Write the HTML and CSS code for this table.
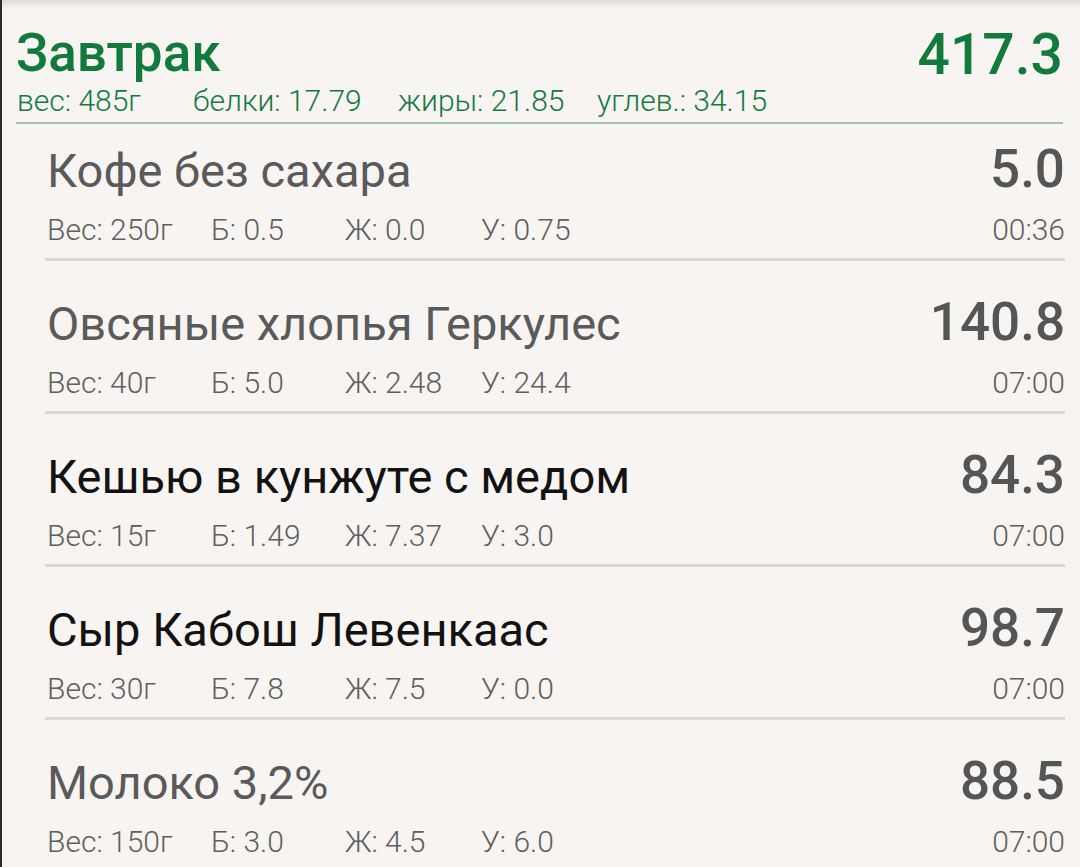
FILE: index.html
```html
<!DOCTYPE html>
<html lang="ru">
<head>
<meta charset="utf-8">
<title>Завтрак</title>
<link rel="stylesheet" href="styles.css">
</head>
<body>
<div class="screen">
  <header class="meal">
    <div class="meal-top">
      <h1 class="meal-title">Завтрак</h1>
      <div class="meal-kcal">417.3</div>
    </div>
    <div class="meal-stats">
      <span>вес: 485г</span>
      <span>белки: 17.79</span>
      <span>жиры: 21.85</span>
      <span>углев.: 34.15</span>
    </div>
  </header>
  <ul class="items">
    <li class="item">
      <div class="item-top"><span class="item-name">Кофе без сахара</span><span class="item-kcal">5.0</span></div>
      <div class="item-stats"><span>Вес: 250г</span><span>Б: 0.5</span><span>Ж: 0.0</span><span>У: 0.75</span><span class="item-time">00:36</span></div>
    </li>
    <li class="item">
      <div class="item-top"><span class="item-name">Овсяные хлопья Геркулес</span><span class="item-kcal">140.8</span></div>
      <div class="item-stats"><span>Вес: 40г</span><span>Б: 5.0</span><span>Ж: 2.48</span><span>У: 24.4</span><span class="item-time">07:00</span></div>
    </li>
    <li class="item">
      <div class="item-top"><span class="item-name item-name--dark">Кешью в кунжуте с медом</span><span class="item-kcal">84.3</span></div>
      <div class="item-stats"><span>Вес: 15г</span><span>Б: 1.49</span><span>Ж: 7.37</span><span>У: 3.0</span><span class="item-time">07:00</span></div>
    </li>
    <li class="item">
      <div class="item-top"><span class="item-name item-name--dark">Сыр Кабош Левенкаас</span><span class="item-kcal">98.7</span></div>
      <div class="item-stats"><span>Вес: 30г</span><span>Б: 7.8</span><span>Ж: 7.5</span><span>У: 0.0</span><span class="item-time">07:00</span></div>
    </li>
    <li class="item">
      <div class="item-top"><span class="item-name">Молоко 3,2%</span><span class="item-kcal">88.5</span></div>
      <div class="item-stats"><span>Вес: 150г</span><span>Б: 3.0</span><span>Ж: 4.5</span><span>У: 6.0</span><span class="item-time">07:00</span></div>
    </li>
  </ul>
</div>
</body>
</html>
```

FILE: styles.css
```css
html, body {
  margin: 0;
  padding: 0;
}

body {
  width: 1080px;
  height: 867px;
  overflow: hidden;
  background: #f7f4f1;
  font-family: Roboto, "Noto Sans", sans-serif;
}

.screen {
  height: 867px;
  box-sizing: border-box;
  border-left: 2px solid #2e2c2b;
  background: linear-gradient(#dedcda, #f7f4f1 9px);
}

.meal {
  margin: 0 17px 0 14px;
  padding-top: 23px;
  border-bottom: 2px solid #9cc8a8;
}

.meal-top {
  display: flex;
  justify-content: space-between;
  align-items: flex-start;
}

.meal-title {
  margin: 0;
  font-size: 53px;
  line-height: 60px;
  font-weight: 500;
  color: #137a3d;
}

.meal-kcal {
  margin-top: 2px;
  font-size: 57px;
  line-height: 60px;
  font-weight: 500;
  color: #137a3d;
}

.meal-stats {
  display: grid;
  grid-template-columns: 176px 205px 199px auto;
  margin-top: 1px;
  padding: 0 0 6px 1px;
  font-size: 30px;
  line-height: 30px;
  font-weight: 300;
  color: #137a3d;
}

.items {
  list-style: none;
  margin: 0 15px 0 43px;
  padding: 0;
}

.item {
  padding: 34px 0 11px;
  border-bottom: 3px solid #dad7d4;
}

.item:first-child {
  padding-top: 18px;
}

.item-top {
  display: flex;
  justify-content: space-between;
  align-items: baseline;
  height: 54px;
}

.item-name {
  font-size: 47px;
  line-height: 54px;
  color: #5a5a5a;
  padding-left: 2px;
}

.item-name--dark {
  color: #121212;
}

.item-kcal {
  font-size: 53px;
  line-height: 54px;
  font-weight: 500;
  color: #555555;
}

.item-stats {
  display: grid;
  grid-template-columns: 164px 134px 136px 1fr auto;
  margin-top: 17px;
  padding-left: 2px;
  font-size: 30px;
  line-height: 34px;
  font-weight: 300;
  color: #5f5f5f;
}

.item-time {
  text-align: right;
}
```
